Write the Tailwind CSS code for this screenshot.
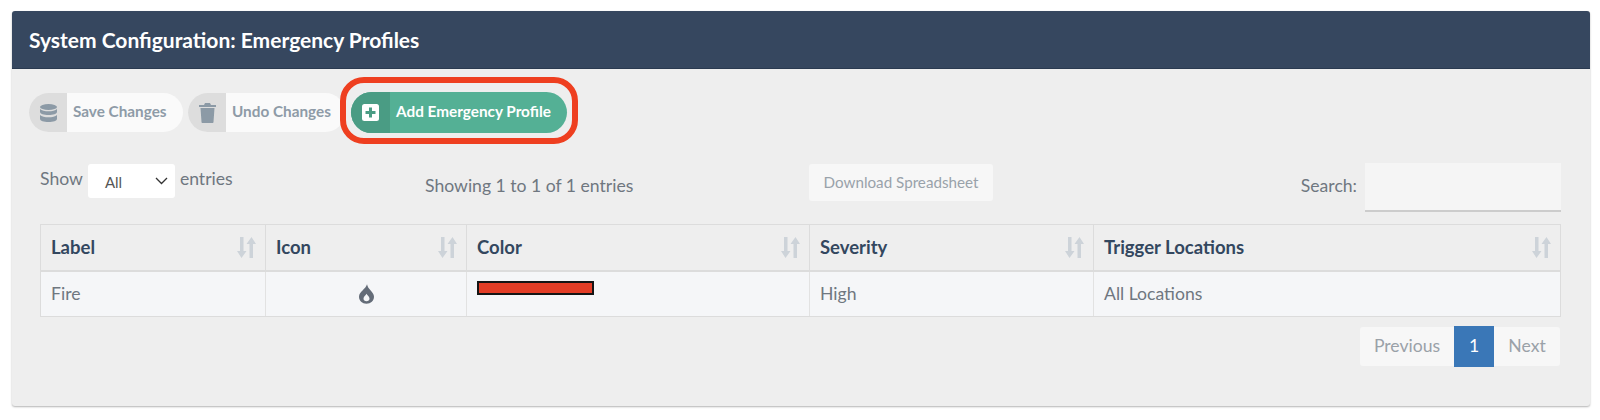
<!DOCTYPE html>
<html lang="en">
  <head>
    <meta charset="UTF-8" />
    <script src="https://cdn.jsdelivr.net/npm/@tailwindcss/browser@4"></script>
    <title>Emergency Profiles</title>
  </head>
  <body class="bg-white font-['Lato','Noto_Sans',sans-serif]">
    <div class="h-[420px] pt-[11px] pl-[12px] pr-[10px]">
      <!-- Panel -->
      <section class="h-[395px] bg-[#eeeeee] rounded-[3px] shadow-[0_1px_2px_rgba(0,0,0,0.3)] overflow-hidden">
        <header class="h-[58px] bg-[#36475f] border-b border-[#2a3a50] pl-[17px] flex items-center">
          <h1 class="text-[21px] font-bold text-white">System Configuration: Emergency Profiles</h1>
        </header>

        <!-- Toolbar -->
        <div class="flex items-center pl-[17px] pt-[23px] h-[64px]">
          <button class="h-[39px] w-[154px] flex items-center rounded-full bg-[#fafafa] overflow-hidden">
            <span class="w-[38px] h-full bg-[#dddddd] flex items-center justify-center">
              <svg class="w-[17px] h-[18px] text-[#8c9aa6]" viewBox="0 0 17 18" fill="currentColor">
                <ellipse cx="8.5" cy="3" rx="8.5" ry="3" />
                <path d="M0 5c1.5 1.600 5 2.300 8.500 2.300S15.500 6.600 17 5v3c0 1.700-3.800 3-8.500 3S0 9.700 0 8z" />
                <path d="M0 11c1.500 1.600 5 2.300 8.500 2.300S15.500 12.600 17 11v4c0 1.700-3.800 3-8.500 3S0 16.700 0 15z" />
              </svg>
            </span>
            <span class="ml-[6px] -mt-[2px] text-[15.3px] font-bold text-[#8e9ba7]">Save Changes</span>
          </button>
          <button class="ml-[5px] h-[39px] w-[157px] flex items-center rounded-full bg-[#fafafa] overflow-hidden">
            <span class="w-[38px] h-full bg-[#dddddd] flex items-center justify-center">
              <svg class="w-[17px] h-[20px] text-[#8c9aa6]" viewBox="0 0 17 20" fill="currentColor">
                <path d="M6 0h5l1 2h5v2H0V2h5z" />
                <path d="M1.500 5h14l-1 14c0 .6-.5 1-1 1h-10c-.5 0-1-.4-1-1z" />
              </svg>
            </span>
            <span class="ml-[6px] -mt-[2px] text-[15.3px] font-bold text-[#8e9ba7]">Undo Changes</span>
          </button>
          <div class="relative ml-[6px]">
            <button class="h-[41px] w-[216px] flex items-center rounded-full bg-[#54b095] overflow-hidden">
              <span class="w-[39px] h-full bg-[#4a9c84] flex items-center justify-center">
                <svg class="w-[17px] h-[17px]" viewBox="0 0 17 17">
                  <rect width="17" height="17" rx="2.500" fill="#ffffff" />
                  <path d="M7 3.500h3V7h3.500v3H10v3.500H7V10H3.500V7H7z" fill="#4a9c84" />
                </svg>
              </span>
              <span class="ml-[6px] -mt-[2px] text-[15.3px] font-bold text-white">Add Emergency Profile</span>
            </button>
            <!-- Highlight ring -->
            <div class="absolute -left-[11px] -right-[11px] -top-[15px] -bottom-[11px] border-[6px] border-[#ee3f20] rounded-[24px]"></div>
          </div>
        </div>

        <!-- Table controls -->
        <div class="h-[91px] ml-[28px] w-[1521px] text-[#6f7780] text-[17.6px]">
          <div class="flex items-start pt-[31px] h-full">
            <div class="flex items-start w-[385px]">
              <span class="mt-[-2px] leading-[34px]">Show</span>
              <div class="ml-[5px] w-[87px] h-[34px] bg-white rounded-[3px] flex items-center justify-between pl-[17px] pr-[7px] text-[15px] text-[#555]">
                <span class="pt-[2px]">All</span>
                <svg class="w-[13px] h-[8px]" viewBox="0 0 13 8" fill="none" stroke="#333" stroke-width="1.300"><path d="M1 1l5.500 5.500L12 1" /></svg>
              </div>
              <span class="ml-[5px] mt-[-2px] leading-[34px]">entries</span>
            </div>
            <span class="leading-[34px] mt-[5px] w-[384px]">Showing 1 to 1 of 1 entries</span>
            <button class="w-[184px] h-[37px] bg-[#f7f7f7] rounded-[3px] text-[15.2px] text-[#99a2aa]">Download Spreadsheet</button>
            <div class="flex-1 flex justify-end items-start">
              <span class="leading-[34px] mt-[5px] mr-[8px]">Search:</span>
              <div class="w-[196px] h-[49px] bg-[#f5f5f5] border-b-2 border-[#cccccc] -mt-[1px]"></div>
            </div>
          </div>
        </div>

        <!-- Table -->
        <div class="ml-[28px] w-[1521px] border border-[#dcdcdc] text-[17.6px]">
          <div class="grid grid-cols-[225px_201px_343px_284px_1fr] h-[47px] border-b-2 border-[#dcdcdc] font-bold text-[18.5px] text-[#33475f] bg-[#eeeeee]">
            <div class="flex items-center justify-between pl-[10px] pr-[9px] border-r border-[#dcdcdc]">Label<svg class="w-[19px] h-[21px]" viewBox="0 0 19 21" fill="#cdd3d9"><path d="M6.500 0v14h3l-5 7-4.500-7h3V0z" /><path d="M12.500 21V7h-3l5-7L19 7h-3v14z" /></svg></div>
            <div class="flex items-center justify-between pl-[10px] pr-[9px] border-r border-[#dcdcdc]">Icon<svg class="w-[19px] h-[21px]" viewBox="0 0 19 21" fill="#cdd3d9"><path d="M6.500 0v14h3l-5 7-4.500-7h3V0z" /><path d="M12.500 21V7h-3l5-7L19 7h-3v14z" /></svg></div>
            <div class="flex items-center justify-between pl-[10px] pr-[9px] border-r border-[#dcdcdc]">Color<svg class="w-[19px] h-[21px]" viewBox="0 0 19 21" fill="#cdd3d9"><path d="M6.500 0v14h3l-5 7-4.500-7h3V0z" /><path d="M12.500 21V7h-3l5-7L19 7h-3v14z" /></svg></div>
            <div class="flex items-center justify-between pl-[10px] pr-[9px] border-r border-[#dcdcdc]">Severity<svg class="w-[19px] h-[21px]" viewBox="0 0 19 21" fill="#cdd3d9"><path d="M6.500 0v14h3l-5 7-4.500-7h3V0z" /><path d="M12.500 21V7h-3l5-7L19 7h-3v14z" /></svg></div>
            <div class="flex items-center justify-between pl-[10px] pr-[9px]">Trigger Locations<svg class="w-[19px] h-[21px]" viewBox="0 0 19 21" fill="#cdd3d9"><path d="M6.500 0v14h3l-5 7-4.500-7h3V0z" /><path d="M12.500 21V7h-3l5-7L19 7h-3v14z" /></svg></div>
          </div>
          <div class="grid grid-cols-[225px_201px_343px_284px_1fr] h-[44px] text-[#6f7780] bg-[#f5f6f8]">
            <div class="flex items-center px-[10px] border-r border-[#e2e2e2]">Fire</div>
            <div class="flex items-center justify-center border-r border-[#e2e2e2]">
              <svg class="w-[15px] h-[20px] text-[#646c78]" viewBox="0 0 14 18" fill="currentColor">
                <path fill-rule="evenodd" d="M7.500 0c.4 2.600 1.800 4 3.400 5.800C12.500 7.600 14 9.300 14 11.500 14 15.200 11 18 7 18s-7-2.800-7-6.500C0 8.800 1.700 7.400 3.300 5.700 4.900 4 6.800 2.500 7.500 0zM7 8.800c-.8 1.500-2.800 2.700-2.800 4.700 0 1.400 1.200 2.300 2.800 2.300s2.800-.9 2.800-2.300c0-2-2-3.200-2.800-4.700z" />
              </svg>
            </div>
            <div class="px-[10px] pt-[9px] border-r border-[#e2e2e2]">
              <div class="w-[117px] h-[14px] bg-[#e33d26] border-2 border-[#151515]"></div>
            </div>
            <div class="flex items-center px-[10px] border-r border-[#e2e2e2]">High</div>
            <div class="flex items-center px-[10px]">All Locations</div>
          </div>
        </div>

        <!-- Pagination -->
        <div class="flex justify-end ml-[28px] w-[1520px] mt-[10px] text-[17.6px]">
          <div class="flex items-center h-[39px] bg-[#f7f7f7] rounded-[3px] text-[#9aa1a8]">
            <span class="w-[94px] text-center">Previous</span>
            <span class="w-[40px] h-[41px] bg-[#3a77b7] text-white flex items-center justify-center">1</span>
            <span class="w-[66px] text-center">Next</span>
          </div>
        </div>
      </section>
    </div>
  </body>
</html>
